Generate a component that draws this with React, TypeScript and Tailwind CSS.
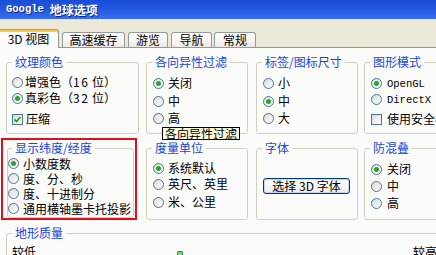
import React from "react";

const CJK = '"Noto Sans CJK SC", "Noto Sans CJK JP", sans-serif';
const MONO = '"Liberation Mono", "DejaVu Sans Mono", monospace';

function Radio({ checked }: { checked?: boolean }) {
  return (
    <span className="flex h-[11px] w-[11px] shrink-0 items-center justify-center rounded-full border border-[#4a74a0] bg-linear-to-br from-[#dcdbd5] to-white">
      {checked && <span className="h-[5px] w-[5px] rounded-full bg-[#2aa52a]" />}
    </span>
  );
}

function Check({ checked }: { checked?: boolean }) {
  return (
    <span className="flex h-[11px] w-[11px] shrink-0 items-center justify-center border border-[#4a74a0] bg-linear-to-br from-[#dcdbd5] to-white">
      {checked && (
        <svg width="9" height="9" viewBox="0 0 9 9">
          <path d="M1.5 4.5 L3.5 6.5 L7.5 2" stroke="#21a121" strokeWidth="1.8" fill="none" />
        </svg>
      )}
    </span>
  );
}

function Row({
  children,
  control,
  gap,
  h = 16,
  mt = 0,
}: {
  children: React.ReactNode;
  control: React.ReactNode;
  gap: string;
  h?: number;
  mt?: number;
}) {
  return (
    <div className={`flex items-center ${gap}`} style={{ height: h, marginTop: mt }}>
      {control}
      <span className="whitespace-nowrap text-[12px] leading-none text-black">{children}</span>
    </div>
  );
}

function Box({
  title,
  className,
  children,
  legendMl = "ml-[5px]",
}: {
  title: string;
  className: string;
  children?: React.ReactNode;
  legendMl?: string;
}) {
  return (
    <fieldset className={`min-w-0 shrink-0 rounded-[3px] border border-[#d0d0bf] ${className}`}>
      <legend className={`${legendMl} px-[3px] text-[12px] leading-[12px] text-[#1846d8]`}>{title}</legend>
      {children}
    </fieldset>
  );
}

export default function App() {
  return (
    <div
      lang="zh-CN"
      className="h-[255px] w-[436px] overflow-hidden bg-[#ece9d8] [text-spacing-trim:space-all]"
      style={{ fontFamily: CJK }}
    >
      {/* title bar */}
      <div className="flex h-[19px] items-center bg-linear-to-b from-[#1a4cd6] via-[#2458e2] to-[#3a6ef0] pl-[6px] text-white [text-shadow:1px_1px_#0c2a90]">
        <span className="text-[10.5px] font-bold leading-none" style={{ fontFamily: MONO }}>
          Google
        </span>
        <span className="ml-[6px] text-[12px] font-bold leading-none">地球选项</span>
      </div>

      {/* tab strip */}
      <div className="flex h-[28px] items-end text-[12px] leading-none text-black">
        <div className="relative z-10 -mb-px ml-[-2px] flex h-[19px] w-[61px] items-center justify-center rounded-t-[3px] border border-b-0 border-[#919b9c] border-t-[#e68b2c] bg-[#fcfcfe] shadow-[inset_0_2px_0_#ffc83c]">
          3D 视图
        </div>
        <div className="ml-[3px] flex h-[15px] w-[63px] items-center justify-center rounded-t-[3px] border border-b-0 border-[#919b9c] bg-linear-to-b from-white to-[#ecebe6]">
          高速缓存
        </div>
        <div className="ml-[3px] flex h-[15px] w-[40px] items-center justify-center rounded-t-[3px] border border-b-0 border-[#919b9c] bg-linear-to-b from-white to-[#ecebe6]">
          游览
        </div>
        <div className="ml-[3px] flex h-[15px] w-[41px] items-center justify-center rounded-t-[3px] border border-b-0 border-[#919b9c] bg-linear-to-b from-white to-[#ecebe6]">
          导航
        </div>
        <div className="ml-[2px] flex h-[15px] w-[42px] items-center justify-center rounded-t-[3px] border border-b-0 border-[#919b9c] bg-linear-to-b from-white to-[#ecebe6]">
          常规
        </div>
      </div>

      {/* panel */}
      <div className="relative h-[208px] border-t border-[#919b9c] bg-[#fbfbf9] pt-[8px]">
        {/* row 1 */}
        <div className="flex">
          <Box title="纹理颜色" className="ml-[6px] h-[78px] w-[133px]">
            <div className="pl-[5px] pt-[6px]">
              <Row control={<Radio />} gap="gap-[2px]">
                增强色（<span className="tracking-[1.5px]">16</span> 位）
              </Row>
              <Row control={<Radio checked />} gap="gap-[2px]">
                真彩色（<span className="tracking-[1.5px]">32</span> 位）
              </Row>
              <Row control={<Check checked />} gap="gap-[3px]" mt={5}>压缩</Row>
            </div>
          </Box>
          <Box title="各向异性过滤" className="ml-[7px] h-[78px] w-[102px]">
            <div className="pl-[6px] pt-[7px]">
              <Row control={<Radio checked />} gap="gap-[4px]">关闭</Row>
              <Row control={<Radio />} gap="gap-[4px]" mt={2}>中</Row>
              <Row control={<Radio />} gap="gap-[4px]" mt={1}>高</Row>
            </div>
          </Box>
          <Box title="标签/图标尺寸" className="ml-[8px] h-[78px] w-[102px]">
            <div className="pl-[6px] pt-[7px]">
              <Row control={<Radio />} gap="gap-[4px]">小</Row>
              <Row control={<Radio checked />} gap="gap-[4px]" mt={2}>中</Row>
              <Row control={<Radio />} gap="gap-[4px]" mt={1}>大</Row>
            </div>
          </Box>
          <Box title="图形模式" className="ml-[6px] h-[78px] w-[102px]">
            <div className="pl-[6px] pt-[7px]">
              <Row control={<Radio checked />} gap="gap-[5px]">
                <span className="text-[10.5px]" style={{ fontFamily: MONO }}>OpenGL</span>
              </Row>
              <Row control={<Radio />} gap="gap-[5px]">
                <span className="text-[10.5px]" style={{ fontFamily: MONO }}>DirectX</span>
              </Row>
              <Row control={<Check />} gap="gap-[5px]" mt={4}>使用安全模式</Row>
            </div>
          </Box>
        </div>

        {/* row 2 */}
        <div className="mt-[4px] flex">
          <div className="ml-[1px] h-[82px] w-[136px] shrink-0 border-2 border-[#e3101c] pt-[2px]">
            <Box title="显示纬度/经度" className="ml-[4px] h-[76px] w-[127px]" legendMl="ml-[4px]">
              <div className="pt-[2px]">
                <Row control={<Radio checked />} gap="gap-[4px]" h={15}>小数度数</Row>
                <Row control={<Radio />} gap="gap-[4px]" h={15}>度、分、秒</Row>
                <Row control={<Radio />} gap="gap-[4px]" h={15}>度、十进制分</Row>
                <Row control={<Radio />} gap="gap-[4px]" h={15}>通用横轴墨卡托投影</Row>
              </div>
            </Box>
          </div>
          <Box title="度量单位" className="ml-[9px] mt-[4px] h-[78px] w-[102px]">
            <div className="pl-[6px] pt-[6px]">
              <Row control={<Radio checked />} gap="gap-[4px]">系统默认</Row>
              <Row control={<Radio />} gap="gap-[4px]">英尺、英里</Row>
              <Row control={<Radio />} gap="gap-[4px]" mt={2}>米、公里</Row>
            </div>
          </Box>
          <Box title="字体" className="ml-[8px] mt-[4px] h-[78px] w-[102px]">
            <div className="pl-[6px] pt-[24px]">
              <div className="flex h-[16px] w-[87px] items-center justify-center rounded-[3px] border border-[#003c74] bg-linear-to-b from-white to-[#ecebe6] text-[12px] leading-none text-black shadow-[inset_0_0_0_1px_#c4d6f4]">
                选择 3D 字体
              </div>
            </div>
          </Box>
          <Box title="防混叠" className="ml-[6px] mt-[4px] h-[78px] w-[102px]">
            <div className="pl-[6px] pt-[7px]">
              <Row control={<Radio checked />} gap="gap-[5px]">关闭</Row>
              <Row control={<Radio />} gap="gap-[5px]" mt={1}>中</Row>
              <Row control={<Radio />} gap="gap-[5px]" mt={1}>高</Row>
            </div>
          </Box>
        </div>

        {/* row 3 */}
        <div className="mt-[7px] flex">
          <Box title="地形质量" className="ml-[6px] h-[60px] w-[440px]">
            <div className="flex items-start pl-[5px] pt-[7px] text-[12px] leading-none text-black">
              <span>较低</span>
              <span className="ml-[141px] mt-[5px] h-[10px] w-[6px] rounded-t-[1px] border border-[#3c8a3c] bg-[#7ad87a]" />
              <span className="ml-[230px]">较高</span>
            </div>
          </Box>
        </div>

        {/* tooltip */}
        <div className="absolute left-[162px] top-[79px] flex h-[13px] w-[78px] items-center justify-center border border-black bg-[#ffffe1] text-[12px] leading-none text-black">
          各向异性过滤
        </div>
      </div>
    </div>
  );
}
